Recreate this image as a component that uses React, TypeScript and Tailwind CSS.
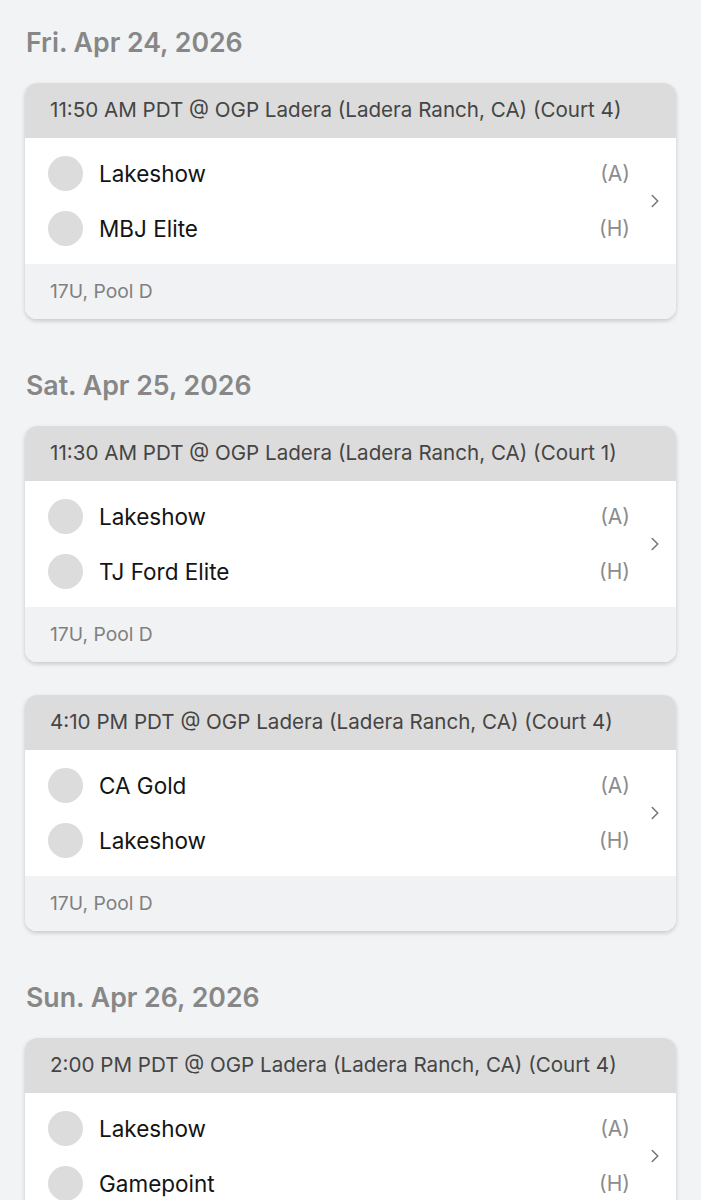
import { ChevronRight } from "lucide-react"

type Game = {
  time: string
  court: string
  away: string
  home: string
  division: string
}

const days: { label: string; games: Game[] }[] = [
  {
    label: "Fri. Apr 24, 2026",
    games: [{ time: "11:50 AM PDT", court: "Court 4", away: "Lakeshow", home: "MBJ Elite", division: "17U, Pool D" }],
  },
  {
    label: "Sat. Apr 25, 2026",
    games: [
      { time: "11:30 AM PDT", court: "Court 1", away: "Lakeshow", home: "TJ Ford Elite", division: "17U, Pool D" },
      { time: "4:10 PM PDT", court: "Court 4", away: "CA Gold", home: "Lakeshow", division: "17U, Pool D" },
    ],
  },
  {
    label: "Sun. Apr 26, 2026",
    games: [{ time: "2:00 PM PDT", court: "Court 4", away: "Lakeshow", home: "Gamepoint", division: "17U, Pool D" }],
  },
]

function TeamRow({ name, side }: { name: string; side: string }) {
  return (
    <div className="flex items-center h-[55px]">
      <div className="w-[35px] h-[35px] rounded-full bg-[#dcdcdc] ml-[23px]" />
      <span className="ml-[16px] text-[22.5px] text-[#141414]">{name}</span>
      <span className="ml-auto text-[21px] text-[#8c8c8c]">{side}</span>
    </div>
  )
}

function GameCard({ game }: { game: Game }) {
  return (
    <div className="rounded-[12px] overflow-hidden bg-white shadow-[0_2px_4px_rgba(0,0,0,0.18)]">
      <div className="h-[55px] bg-[#dcdcdc] flex items-center px-[25px] text-[20.6px] text-[#454545] whitespace-nowrap">
        {game.time} @ OGP Ladera (Ladera Ranch, CA) ({game.court})
      </div>
      <div className="flex items-center py-[8px]">
        <div className="flex-1">
          <TeamRow name={game.away} side="(A)" />
          <TeamRow name={game.home} side="(H)" />
        </div>
        <div className="w-[46px] flex justify-center text-[#777777] pl-[4px]">
          <ChevronRight size={22} strokeWidth={1.7} />
        </div>
      </div>
      <div className="h-[55px] bg-[#f1f2f4] flex items-center px-[25px] text-[19.3px] text-[#808080]">
        {game.division}
      </div>
    </div>
  )
}

export default function App() {
  return (
    <div className="min-h-screen bg-[#f2f3f5] px-[25px] pt-[25px] font-['Inter','Noto_Sans',sans-serif]">
      <div className="flex flex-col gap-[49px]">
        {days.map((day) => (
          <div key={day.label}>
            <h2 className="h-[34px] leading-[34px] text-[26.7px] font-semibold text-[#878787] pl-[1px] mb-[24px]">
              {day.label}
            </h2>
            <div className="flex flex-col gap-[33px]">
              {day.games.map((g) => (
                <GameCard key={g.time} game={g} />
              ))}
            </div>
          </div>
        ))}
      </div>
    </div>
  )
}
